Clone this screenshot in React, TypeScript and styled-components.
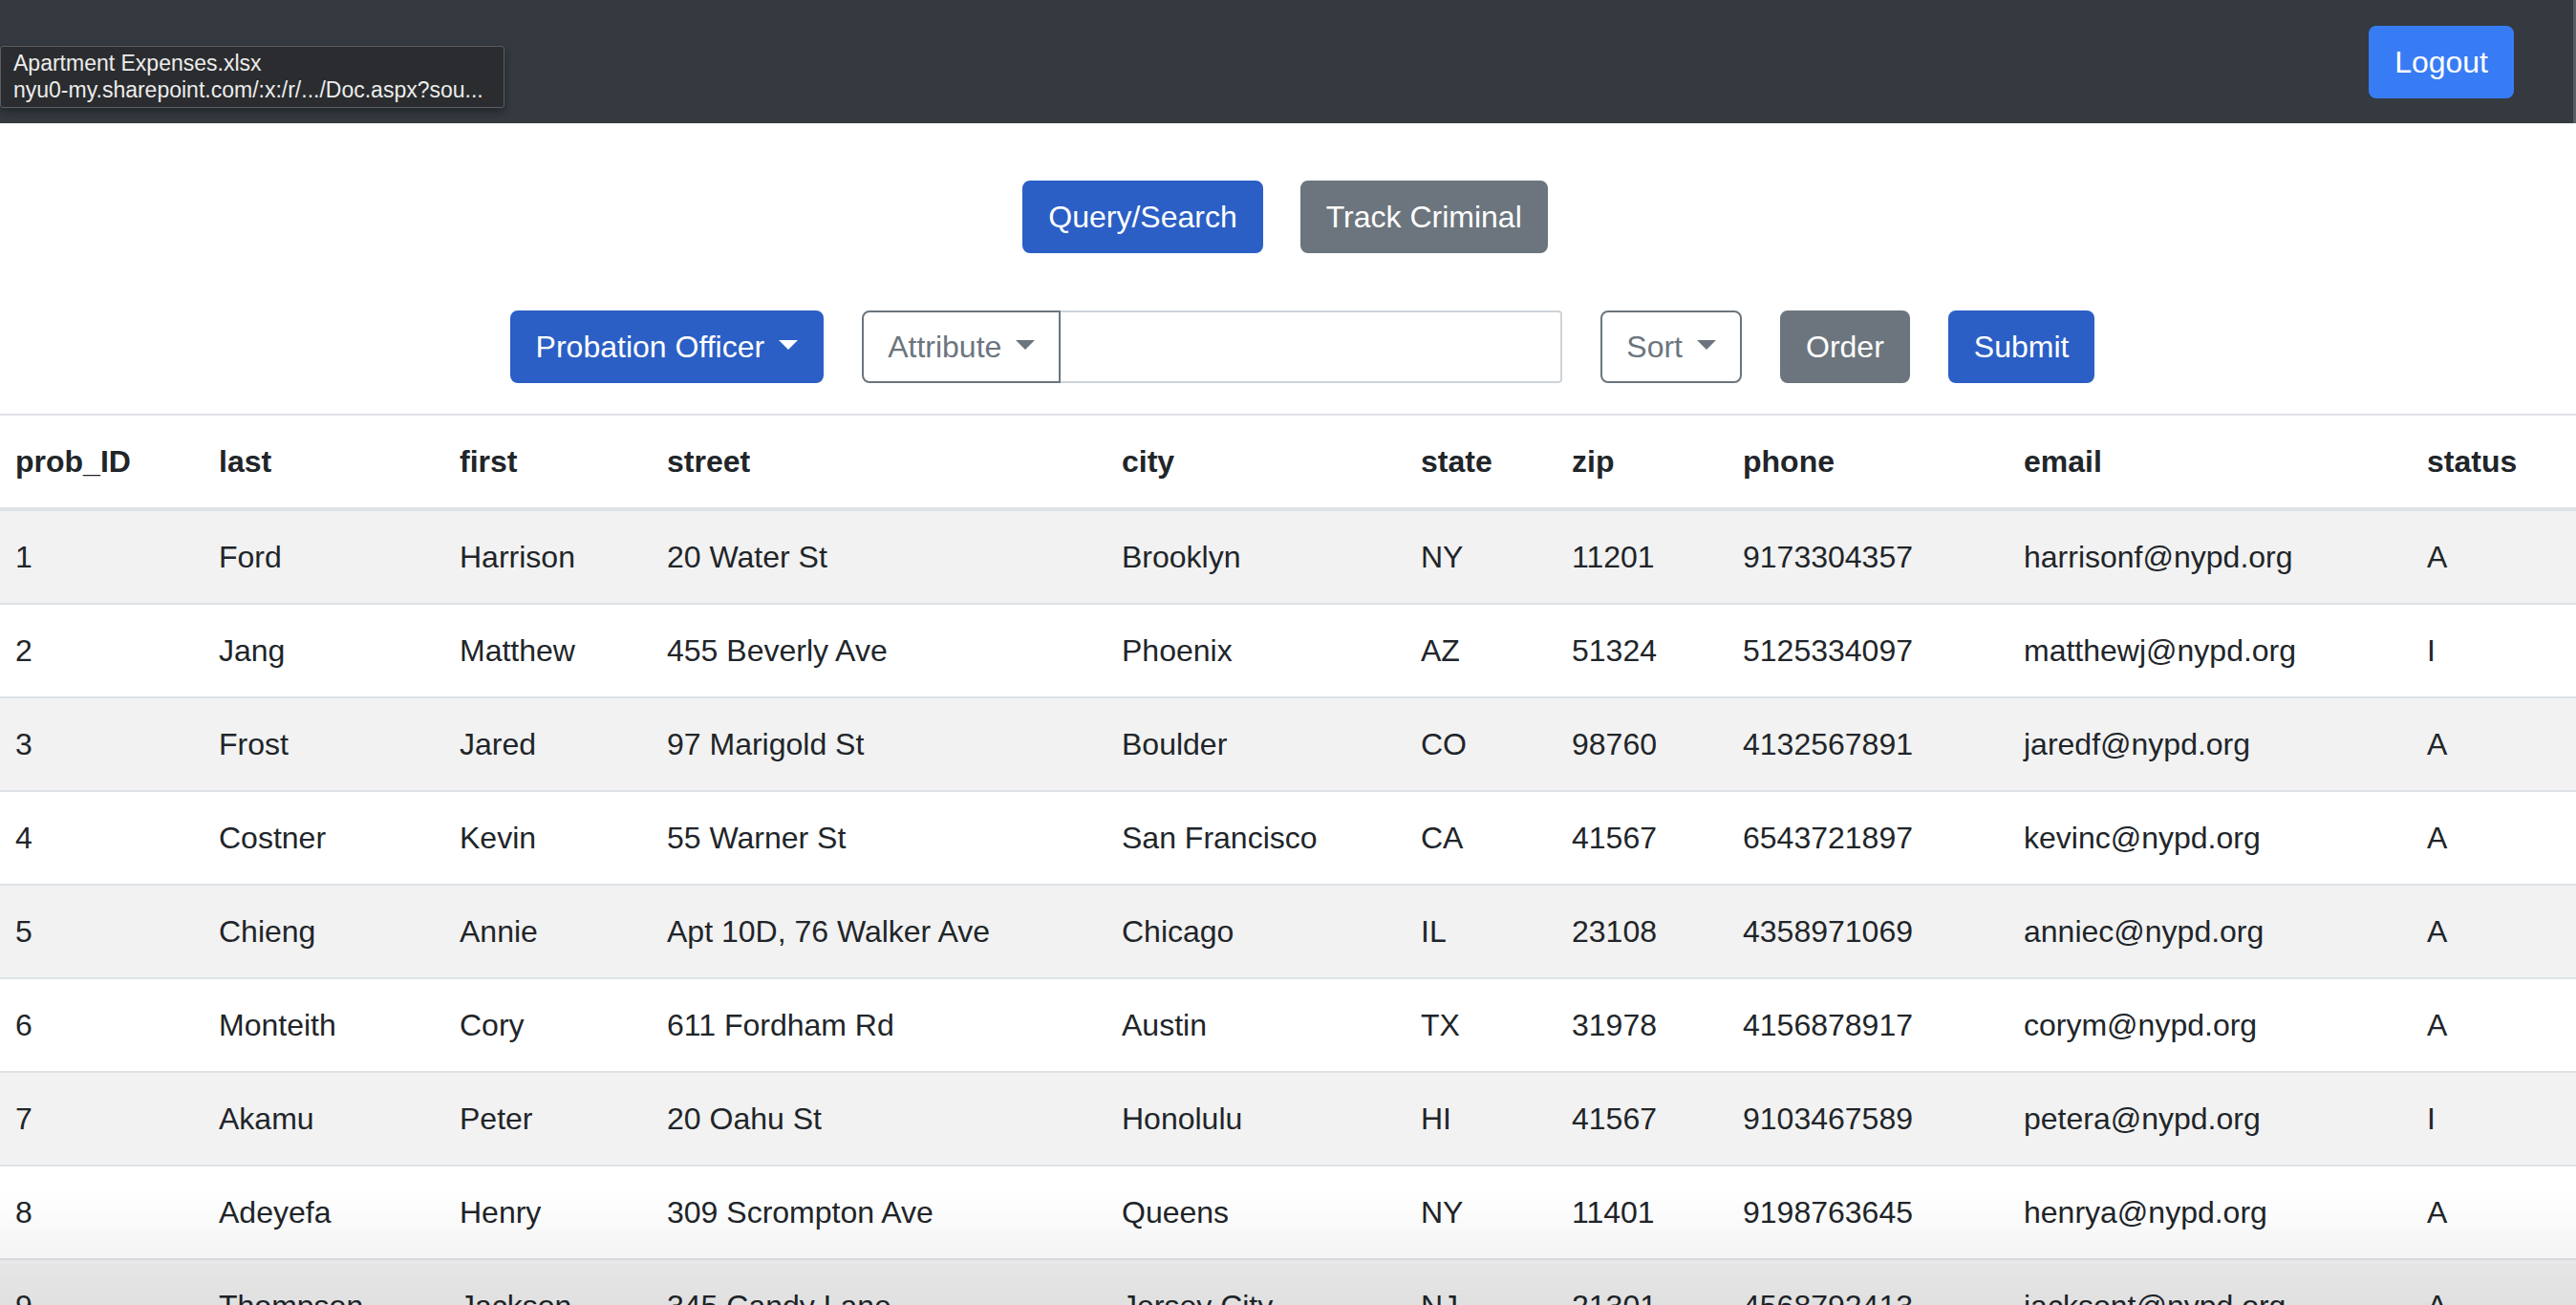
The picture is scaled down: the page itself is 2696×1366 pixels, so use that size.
import React from "react";
import styled, { createGlobalStyle, css } from "styled-components";

const GlobalStyle = createGlobalStyle`
  html, body {
    margin: 0;
    padding: 0;
    background: #ffffff;
  }
  body {
    font-family: "Liberation Sans", Arial, sans-serif;
    font-size: 32px;
    line-height: 1.5;
    color: #212529;
    overflow: hidden;
  }
  * { box-sizing: border-box; }
`;

type Variant = "primary" | "secondary" | "outline" | "bright";

const variants: Record<Variant, ReturnType<typeof css>> = {
  primary: css`
    background: #2b5fc5;
    border-color: #2b5fc5;
    color: #ffffff;
  `,
  secondary: css`
    background: #6c757d;
    border-color: #6c757d;
    color: #ffffff;
  `,
  outline: css`
    background: #ffffff;
    border-color: #6c757d;
    color: #6c757d;
  `,
  bright: css`
    background: #387cf5;
    border-color: #387cf5;
    color: #ffffff;
  `,
};

const Button = styled.button<{ $variant: Variant; $caret?: boolean; $joined?: boolean }>`
  font-family: inherit;
  font-size: 32px;
  line-height: 48px;
  padding: 12px 25px;
  border: 2px solid transparent;
  border-radius: ${(p) => (p.$joined ? "8px 0 0 8px" : "8px")};
  cursor: pointer;
  white-space: nowrap;
  ${(p) => variants[p.$variant]}
  ${(p) =>
    p.$caret &&
    css`
      &::after {
        content: "";
        display: inline-block;
        margin-left: 15px;
        vertical-align: 8px;
        border-top: 10px solid currentColor;
        border-left: 10px solid transparent;
        border-right: 10px solid transparent;
        border-bottom: 0;
      }
    `}
`;

const Navbar = styled.nav`
  height: 129px;
  background: #343a40;
  display: flex;
  align-items: center;
  justify-content: flex-end;
  padding-right: 62px;
  border-right: 3px solid #5a5e63;
`;

const Tooltip = styled.div`
  position: absolute;
  top: 48px;
  left: 0;
  width: 528px;
  padding: 3px 13px 4px;
  background: #2a2c2f;
  border: 1px solid #5b5e62;
  border-radius: 3px;
  box-shadow: 0 4px 10px rgba(0, 0, 0, 0.35);
  color: #ececec;
  font-family: "Liberation Sans", Arial, sans-serif;
  font-size: 23px;
  line-height: 28px;
  white-space: nowrap;
  overflow: hidden;
`;

const TabRow = styled.div`
  display: flex;
  justify-content: center;
  gap: 39px;
  margin-top: 60px;
  padding-right: 6px;
`;

const FilterRow = styled.div`
  display: flex;
  justify-content: center;
  align-items: center;
  gap: 40px;
  margin-top: 60px;
  padding-left: 30px;
`;

const InputGroup = styled.div`
  display: flex;
`;

const TextInput = styled.input`
  width: 525px;
  height: 76px;
  border: 2px solid #ced4da;
  border-left: none;
  border-radius: 0 4px 4px 0;
  font-family: inherit;
  font-size: 32px;
  padding: 0 24px;
  outline: none;
`;

const Table = styled.table`
  width: 100%;
  margin-top: 32px;
  border-collapse: collapse;
  table-layout: fixed;
  border-top: 2px solid #dee2e6;
`;

const HeadCell = styled.th`
  text-align: left;
  font-weight: 700;
  padding: 24px 16px;
  line-height: 48px;
  border-bottom: 4px solid #dee2e6;
  white-space: nowrap;
`;

const Row = styled.tr<{ $striped: boolean }>`
  background: ${(p) => (p.$striped ? "#f2f2f2" : "#ffffff")};
`;

const Cell = styled.td`
  padding: 24px 16px;
  line-height: 48px;
  border-bottom: 2px solid #dee2e6;
  white-space: nowrap;
`;

const BottomShade = styled.div`
  position: fixed;
  left: 0;
  right: 0;
  bottom: 0;
  height: 120px;
  pointer-events: none;
  background: linear-gradient(to bottom, rgba(0, 0, 0, 0), rgba(0, 0, 0, 0.07));
`;

const Page = styled.div`
  position: relative;
  min-height: 1366px;
`;

const columns = [
  { key: "prob_ID", width: 213 },
  { key: "last", width: 252 },
  { key: "first", width: 217 },
  { key: "street", width: 476 },
  { key: "city", width: 313 },
  { key: "state", width: 158 },
  { key: "zip", width: 179 },
  { key: "phone", width: 294 },
  { key: "email", width: 422 },
  { key: "status", width: 172 },
];

const rows: string[][] = [
  ["1", "Ford", "Harrison", "20 Water St", "Brooklyn", "NY", "11201", "9173304357", "harrisonf@nypd.org", "A"],
  ["2", "Jang", "Matthew", "455 Beverly Ave", "Phoenix", "AZ", "51324", "5125334097", "matthewj@nypd.org", "I"],
  ["3", "Frost", "Jared", "97 Marigold St", "Boulder", "CO", "98760", "4132567891", "jaredf@nypd.org", "A"],
  ["4", "Costner", "Kevin", "55 Warner St", "San Francisco", "CA", "41567", "6543721897", "kevinc@nypd.org", "A"],
  ["5", "Chieng", "Annie", "Apt 10D, 76 Walker Ave", "Chicago", "IL", "23108", "4358971069", "anniec@nypd.org", "A"],
  ["6", "Monteith", "Cory", "611 Fordham Rd", "Austin", "TX", "31978", "4156878917", "corym@nypd.org", "A"],
  ["7", "Akamu", "Peter", "20 Oahu St", "Honolulu", "HI", "41567", "9103467589", "petera@nypd.org", "I"],
  ["8", "Adeyefa", "Henry", "309 Scrompton Ave", "Queens", "NY", "11401", "9198763645", "henrya@nypd.org", "A"],
  ["9", "Thompson", "Jackson", "345 Candy Lane", "Jersey City", "NJ", "21301", "4568792413", "jacksont@nypd.org", "A"],
];

export default function App() {
  return (
    <Page>
      <GlobalStyle />
      <Navbar>
        <Button $variant="bright">Logout</Button>
      </Navbar>
      <Tooltip>
        Apartment Expenses.xlsx
        <br />
        nyu0-my.sharepoint.com/:x:/r/.../Doc.aspx?sou...
      </Tooltip>
      <TabRow>
        <Button $variant="primary">Query/Search</Button>
        <Button $variant="secondary">Track Criminal</Button>
      </TabRow>
      <FilterRow>
        <Button $variant="primary" $caret>
          Probation Officer
        </Button>
        <InputGroup>
          <Button $variant="outline" $caret $joined>
            Attribute
          </Button>
          <TextInput type="text" />
        </InputGroup>
        <Button $variant="outline" $caret>
          Sort
        </Button>
        <Button $variant="secondary">Order</Button>
        <Button $variant="primary">Submit</Button>
      </FilterRow>
      <Table>
        <colgroup>
          {columns.map((c) => (
            <col key={c.key} style={{ width: c.width }} />
          ))}
        </colgroup>
        <thead>
          <tr>
            {columns.map((c) => (
              <HeadCell key={c.key}>{c.key}</HeadCell>
            ))}
          </tr>
        </thead>
        <tbody>
          {rows.map((r, i) => (
            <Row key={r[0]} $striped={i % 2 === 0}>
              {r.map((v, j) => (
                <Cell key={j}>{v}</Cell>
              ))}
            </Row>
          ))}
        </tbody>
      </Table>
      <BottomShade />
    </Page>
  );
}
